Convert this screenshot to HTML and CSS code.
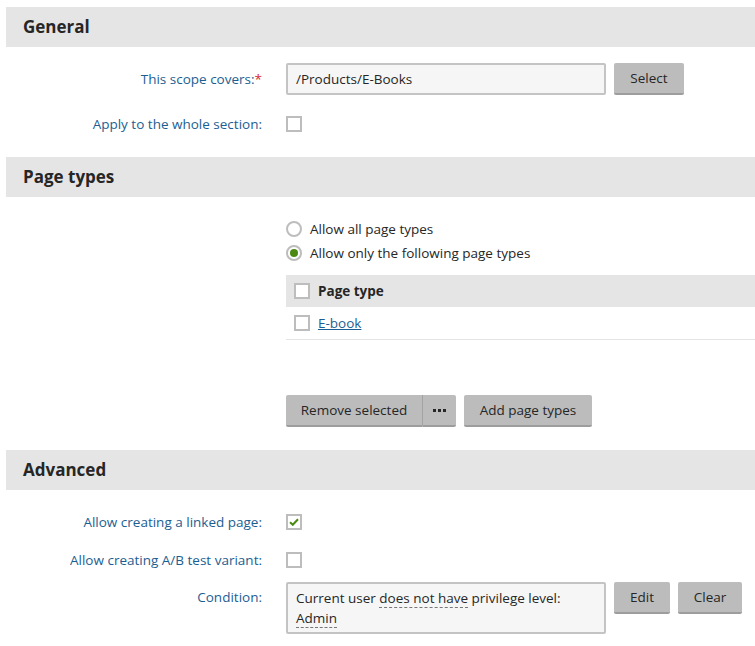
FILE: index.html
```html
<!DOCTYPE html>
<html>
<head>
<meta charset="utf-8">
<link rel="stylesheet" href="styles.css">
</head>
<body>
<div class="page">
  <section class="section">
    <h2 class="section-head">General</h2>
    <div class="section-body general">
      <div class="row row-input">
        <div class="label">This scope covers:<span class="req">*</span></div>
        <div class="control">
          <div class="textbox">/Products/E-Books</div>
          <button class="btn btn-select">Select</button>
        </div>
      </div>
      <div class="row row-check">
        <div class="label">Apply to the whole section:</div>
        <div class="control"><span class="checkbox"></span></div>
      </div>
    </div>
  </section>

  <section class="section">
    <h2 class="section-head">Page types</h2>
    <div class="section-body types">
      <div class="types-col">
        <div class="radio-row"><span class="radio"></span>Allow all page types</div>
        <div class="radio-row"><span class="radio on"></span>Allow only the following page types</div>
        <div class="grid">
          <div class="grid-head"><span class="checkbox"></span><span class="th">Page type</span></div>
          <div class="grid-row"><span class="checkbox"></span><a class="link" href="#">E-book</a></div>
        </div>
        <div class="actions">
          <div class="split">
            <button class="btn btn-remove">Remove selected</button>
            <button class="btn btn-more"><span class="dots"><i></i><i></i><i></i></span></button>
          </div>
          <button class="btn btn-add">Add page types</button>
        </div>
      </div>
    </div>
  </section>

  <section class="section">
    <h2 class="section-head">Advanced</h2>
    <div class="section-body advanced">
      <div class="row row-adv">
        <div class="label">Allow creating a linked page:</div>
        <div class="control"><span class="checkbox checked"><svg width="10" height="8" viewBox="0 0 10 8"><path d="M1 4.2 L3.8 6.8 L9 1.2" fill="none" stroke="#4a8a12" stroke-width="2"/></svg></span></div>
      </div>
      <div class="row row-adv">
        <div class="label">Allow creating A/B test variant:</div>
        <div class="control"><span class="checkbox"></span></div>
      </div>
      <div class="row row-cond">
        <div class="label label-top">Condition:</div>
        <div class="control control-top">
          <div class="condbox">Current user <span class="dash">does not have</span> privilege level: <span class="dash">Admin</span></div>
          <button class="btn btn-edit">Edit</button>
          <button class="btn btn-clear">Clear</button>
        </div>
      </div>
    </div>
  </section>
</div>
</body>
</html>
```
FILE: styles.css
```css
* { box-sizing: border-box; }
html, body { margin: 0; padding: 0; background: #fff; }
body {
  font-family: "Open Sans", "Noto Sans", sans-serif;
  font-size: 13.5px;
  color: #262626;
}
.page { padding: 7px 0 0 6px; }
.section-head {
  margin: 0;
  height: 40px;
  line-height: 40px;
  background: #e5e5e5;
  padding-left: 17px;
  font-size: 17px;
  font-weight: 700;
  color: #262626;
}
.row {
  display: grid;
  grid-template-columns: 256px 1fr;
  column-gap: 24px;
  align-items: center;
}
.label {
  text-align: right;
  color: #1b5e93;
  white-space: nowrap;
}
.req { color: #d8262f; }
.control { display: flex; align-items: center; gap: 8px; }
.general { padding: 16px 0 17px; }
.row-input { height: 32px; }
.row-check { height: 32px; margin-top: 13px; }
.textbox {
  width: 320px;
  height: 32px;
  border: 2px solid #c4c4c4;
  border-radius: 2px;
  background: #f6f6f6;
  padding: 0 8px;
  line-height: 28px;
  color: #262626;
}
.btn {
  font-family: inherit;
  font-size: 13.5px;
  color: #262626;
  background: #bcbcbc;
  border: 0;
  border-bottom: 2px solid #9d9d9d;
  border-radius: 2px;
  height: 32px;
  padding: 0 14px;
  cursor: pointer;
}
.btn-select { width: 70px; padding: 0; }
.checkbox {
  display: inline-flex;
  align-items: center;
  justify-content: center;
  width: 16px;
  height: 16px;
  border: 2px solid #bdbdbd;
  background: #fff;
  flex: none;
}
.types { padding: 20px 0 23px 280px; }
.radio-row {
  display: flex;
  align-items: center;
  height: 24px;
  gap: 8px;
}
.radio {
  width: 16px;
  height: 16px;
  border-radius: 50%;
  border: 2px solid #bdbdbd;
  background: #fff;
  position: relative;
  flex: none;
}
.radio.on::after {
  content: "";
  position: absolute;
  left: 2px; top: 2px;
  width: 8px; height: 8px;
  border-radius: 50%;
  background: #4a8a12;
}
.grid { margin-top: 10px; }
.grid-head {
  display: flex;
  align-items: center;
  height: 32px;
  background: #e5e5e5;
  padding-left: 8px;
  gap: 8px;
}
.th { font-weight: 700; color: #262626; }
.grid-row {
  display: flex;
  align-items: center;
  height: 33px;
  border-bottom: 1px solid #e5e5e5;
  padding-left: 8px;
  gap: 8px;
}
.link { color: #1b5e93; text-decoration: underline; }
.actions { display: flex; gap: 8px; margin-top: 55px; }
.split { display: flex; }
.btn-remove { width: 136px; padding: 0; border-radius: 2px 0 0 2px; }
.btn-more { width: 34px; padding: 0; border-left: 1px solid #a3a3a3; border-radius: 0 2px 2px 0; display: flex; align-items: center; justify-content: center; }
.dots { display: flex; gap: 2px; }
.dots i { width: 3px; height: 3px; background: #262626; display: block; }
.btn-add { width: 128px; padding: 0; }
.advanced { padding: 16px 0 0; }
.row-adv { height: 32px; margin-bottom: 6px; }
.row-cond { align-items: start; }
.label-top { padding-top: 6px; }
.control-top { align-items: flex-start; }
.condbox {
  width: 320px;
  height: 52px;
  border: 2px solid #c4c4c4;
  border-radius: 2px;
  background: #f6f6f6;
  padding: 4px 14px 4px 8px;
  line-height: 20px;
  color: #262626;
}
.dash { border-bottom: 1px dashed #777; }
.btn-edit { width: 56px; padding: 0; }
.btn-clear { width: 64px; padding: 0; }
```
